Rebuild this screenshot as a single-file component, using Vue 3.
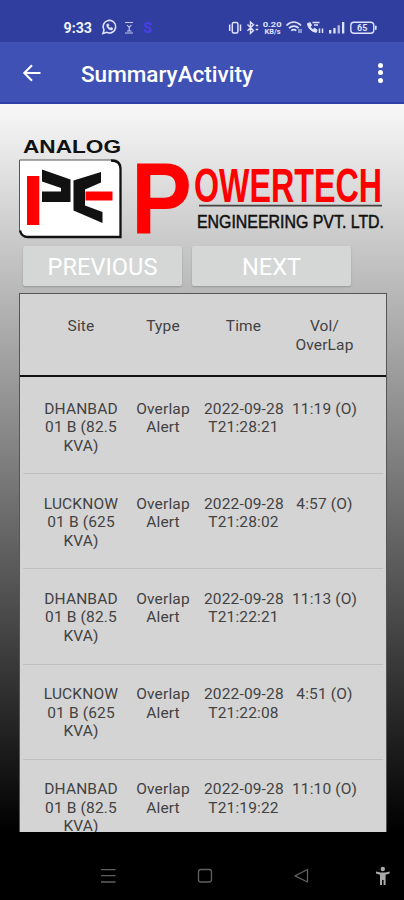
<template>
  <div class="screen">
    <header class="status-bar">
      <svg class="status-icons" viewBox="0 0 404 42" width="404" height="42">
        <text x="63.5" y="32.5" class="clock" textLength="28.5" lengthAdjust="spacingAndGlyphs">9:33</text>
        <g fill="none" stroke="#dfe3ff" stroke-width="1.6">
          <path d="M103 33.5l1-3.6a6.3 6.3 0 1 1 2.6 2.4z" />
          <path d="M106.8 24.3c-.8 3.2 2.6 6.6 5.6 5.4l.4-1.5-1.7-.9-1 .9-1.8-1.9.8-1-.8-1.6z" fill="#dfe3ff" stroke-width=".5" />
          <path d="M125 22.5h8M125 33h8M127 25l2.2 2.4 2.2-2.4M129.2 27.500v4M127 31h4.5" stroke-width="1.1" opacity=".85" />
        </g>
        <text x="143.500" y="33" class="s-mark">S</text>
        <g fill="none" stroke="#dfe3ff" stroke-width="1.5">
          <rect x="232.3" y="22.5" width="5.6" height="10.5" rx="1.5" />
          <path d="M229.700 24.500v6.500M240.500 24.500v6.500" />
          <path d="M247.500 24.500l6 6-3 2.800V22l3 2.800-6 6M255.700 25.500h2.500M255.700 29.500h2.500" stroke-width="1.4" />
          <path d="M286.500 25.500c4.500-4.400 10-4.400 14.500 0M289 28.200c3-2.900 6.800-2.900 9.600 0M291.300 30.600c1.500-1.300 3.500-1.300 5 0" stroke-width="1.700" />
          <path d="M299 29v4M301 29v4" stroke-width="1" />
          <path d="M307.500 23.500c.4 4.500 4 8.300 8.800 8.800l.8-2.400-2.600-1.600-1.500 1.300c-1.500-.8-2-1.600-2.600-2.800l1.200-1.500-1.400-2.600z" fill="#dfe3ff" stroke-width="1" />
          <path d="M312.500 22.500h7M314 25h4M319.500 28.500v4.500M322.500 28.500v4.500" />
        </g>
        <g class="rate">
          <text x="262.700" y="26.500" textLength="19" lengthAdjust="spacingAndGlyphs">0.20</text>
          <text x="264.500" y="33.500" textLength="16" lengthAdjust="spacingAndGlyphs">KB/s</text>
        </g>
        <g fill="#dfe3ff">
          <rect x="329" y="30" width="2.300" height="3.500" />
          <rect x="333.300" y="28" width="2.300" height="5.500" />
          <rect x="337.600" y="25.300" width="2.300" height="8.200" opacity=".75" />
          <rect x="342" y="22" width="2.300" height="11.500" />
          <rect x="375" y="25.500" width="1.600" height="4.500" rx=".8" />
        </g>
        <rect x="350.800" y="22.200" width="23" height="11" rx="3.200" fill="none" stroke="#dfe3ff" stroke-width="1.400" />
        <text x="357" y="31.200" class="battery">65</text>
      </svg>
    </header>

    <div class="app-bar">
      <svg class="back" viewBox="0 0 20 20" width="20" height="20">
        <path d="M18.500 10H2.500M10 2.200L2.300 10l7.700 7.800" fill="none" stroke="#fff" stroke-width="2.100" />
      </svg>
      <h1>SummaryActivity</h1>
      <div class="more"><i></i><i></i><i></i></div>
    </div>

    <main class="content">
      <svg class="logo" viewBox="0 125 404 118" width="404" height="118">
        <text x="23" y="153" class="analog" textLength="98" lengthAdjust="spacingAndGlyphs">ANALOG</text>
        <path d="M19.500 160H114q6.500 0 6.500 7v70H28q-8.500-1-8.500-8z" fill="#fff" stroke="#555" stroke-width="1" />
        <path d="M111 160.500q9.500 0 9.500 8.500v68H28q-6.500 0-8-6.500" fill="none" stroke="#111" stroke-width="2.300" />
        <path d="M27 176h12.300v49H27z" fill="#f00" />
        <path d="M42 169.500l28.500 10v22.500H42v-10.500h19v-3.500l-19-6.500z" fill="#111" />
        <path d="M101 172v10.500l-16 7v16l17.500 6.500v11L73.500 210.500v-30z" fill="#111" />
        <path d="M85.500 191.500h27v9h-27z" fill="#f00" />
        <text x="131" y="234" class="big-p" textLength="61" lengthAdjust="spacingAndGlyphs">P</text>
        <text x="194" y="202" class="power" textLength="188" lengthAdjust="spacingAndGlyphs">OWERTECH</text>
        <path d="M199 205.700h183" stroke="#444" stroke-width="1.800" />
        <text x="197" y="227.500" class="engineering" textLength="187" lengthAdjust="spacingAndGlyphs">ENGINEERING PVT. LTD.</text>
      </svg>

      <div class="pager">
        <button>PREVIOUS</button>
        <button>NEXT</button>
      </div>

      <section class="table">
        <div class="row head">
          <span v-for="col in columns" :key="col">{{ col }}</span>
        </div>
        <div v-for="row in rows" :key="row.time" class="row">
          <span>{{ row.site }}</span>
          <span>{{ 'Overlap\nAlert' }}</span>
          <span>{{ row.time }}</span>
          <span>{{ row.vol }}</span>
        </div>
      </section>
    </main>

    <nav class="nav-bar">
      <svg viewBox="0 832 404 68" width="404" height="68" fill="none" stroke="#606060" stroke-width="1.300">
        <path d="M101 869.700h14.500M101 875.700h14.500M101 882h14.500" />
        <rect x="198.500" y="869.500" width="13" height="12.500" rx="2.500" />
        <path d="M307.500 869.500v12.500l-12.500-6.200z" stroke-linejoin="round" />
        <g fill="#aaa" stroke="none">
          <circle cx="382.800" cy="869" r="2.200" />
          <path d="M376 871.500l4.500 1h4.600l4.500-1v2l-4 1.200v10.300h-2v-5h-1.600v5h-2v-10.300l-4-1.200z" />
        </g>
      </svg>
    </nav>
  </div>
</template>

<script setup>
const columns = ['Site', 'Type', 'Time', 'Vol/\nOverLap']

const dhanbad = 'DHANBAD\n01 B (82.5\nKVA)'
const lucknow = 'LUCKNOW\n01 B (625\nKVA)'

const rows = [
  { site: dhanbad, time: '2022-09-28\nT21:28:21', vol: '11:19 (O)' },
  { site: lucknow, time: '2022-09-28\nT21:28:02', vol: '4:57 (O)' },
  { site: dhanbad, time: '2022-09-28\nT21:22:21', vol: '11:13 (O)' },
  { site: lucknow, time: '2022-09-28\nT21:22:08', vol: '4:51 (O)' },
  { site: dhanbad, time: '2022-09-28\nT21:19:22', vol: '11:10 (O)' },
]
</script>

<style>
body { margin: 0; background: #000; }
</style>

<style scoped>
.screen {
  width: 404px; height: 900px; display: flex; flex-direction: column;
  overflow: hidden; font-family: Roboto, "Liberation Sans", sans-serif;
}
svg { display: block; overflow: visible; }
.status-bar { height: 42px; background: #303f9f; flex-shrink: 0; }
.clock { font: 700 14px Roboto, sans-serif; fill: #f0f2ff; }
.s-mark { font: 700 14px Roboto, sans-serif; fill: #4a3ee8; }
.rate { font: 700 7px/1 Roboto, sans-serif; fill: #dfe3ff; }
.battery { font: 700 9px Roboto, sans-serif; fill: #dfe3ff; }

.app-bar {
  height: 62px; background: #3f51b5; flex-shrink: 0; box-sizing: border-box;
  display: flex; align-items: center; padding: 1px 21px 0 22px;
  border-bottom: 2px solid #2c40a8;
}
h1 { margin: 2px 0 0 39px; font-size: 22.500px; font-weight: 500; color: #fff; line-height: 26px; }
.more { margin-left: auto; display: flex; flex-direction: column; gap: 2.500px; }
.more i { width: 5px; height: 5px; border-radius: 50%; background: #fff; }

.content {
  height: 728px; flex-shrink: 0; box-sizing: border-box; padding-top: 21px;
  display: flex; flex-direction: column; background: linear-gradient(#f8f8f8, #000);
}
.logo { flex-shrink: 0; }
.analog { font: 700 18.500px "Liberation Sans", sans-serif; fill: #111; }
.big-p { font: 700 102px "Liberation Sans", sans-serif; fill: #f00; }
.power { font: 700 48px "Liberation Sans", sans-serif; fill: #f00; }
.engineering { font: 400 18px "Liberation Sans", sans-serif; fill: #111; stroke: #111; stroke-width: 0.500px; }

.pager { display: flex; gap: 10px; padding: 3px 0 0 23px; flex-shrink: 0; }
.pager button {
  width: 159px; height: 40px; border: 0; border-radius: 2px; padding: 2px 0 0;
  background: #d5d7d7; color: #fff; font: 400 23.600px Roboto, sans-serif;
  box-shadow: 0 1px 2px rgba(0, 0, 0, 0.2);
}

.table {
  margin: 7px 0 0 19px; width: 368px; flex: 1; min-height: 0; overflow: hidden;
  box-sizing: border-box; border: 1px solid #555; border-bottom: 0; background: #d4d4d4;
}
.row {
  display: grid; grid-template-columns: 82px 82px 79px 83px; height: 95.200px;
  box-sizing: border-box; margin: 0 3px; padding: 20.500px 0 0 17px;
  border-bottom: 1px solid #c0c0c0;
}
.row span {
  white-space: pre; text-align: center; font-size: 15.500px; line-height: 18.500px;
  color: #424242; letter-spacing: 0.150px;
}
.head { height: 83px; margin: 0; padding: 23px 0 0 20px; border-bottom: 2px solid #111; }
.head + .row { height: 97.200px; padding-top: 22.500px; }

.nav-bar { height: 68px; background: #000; flex-shrink: 0; }
</style>
